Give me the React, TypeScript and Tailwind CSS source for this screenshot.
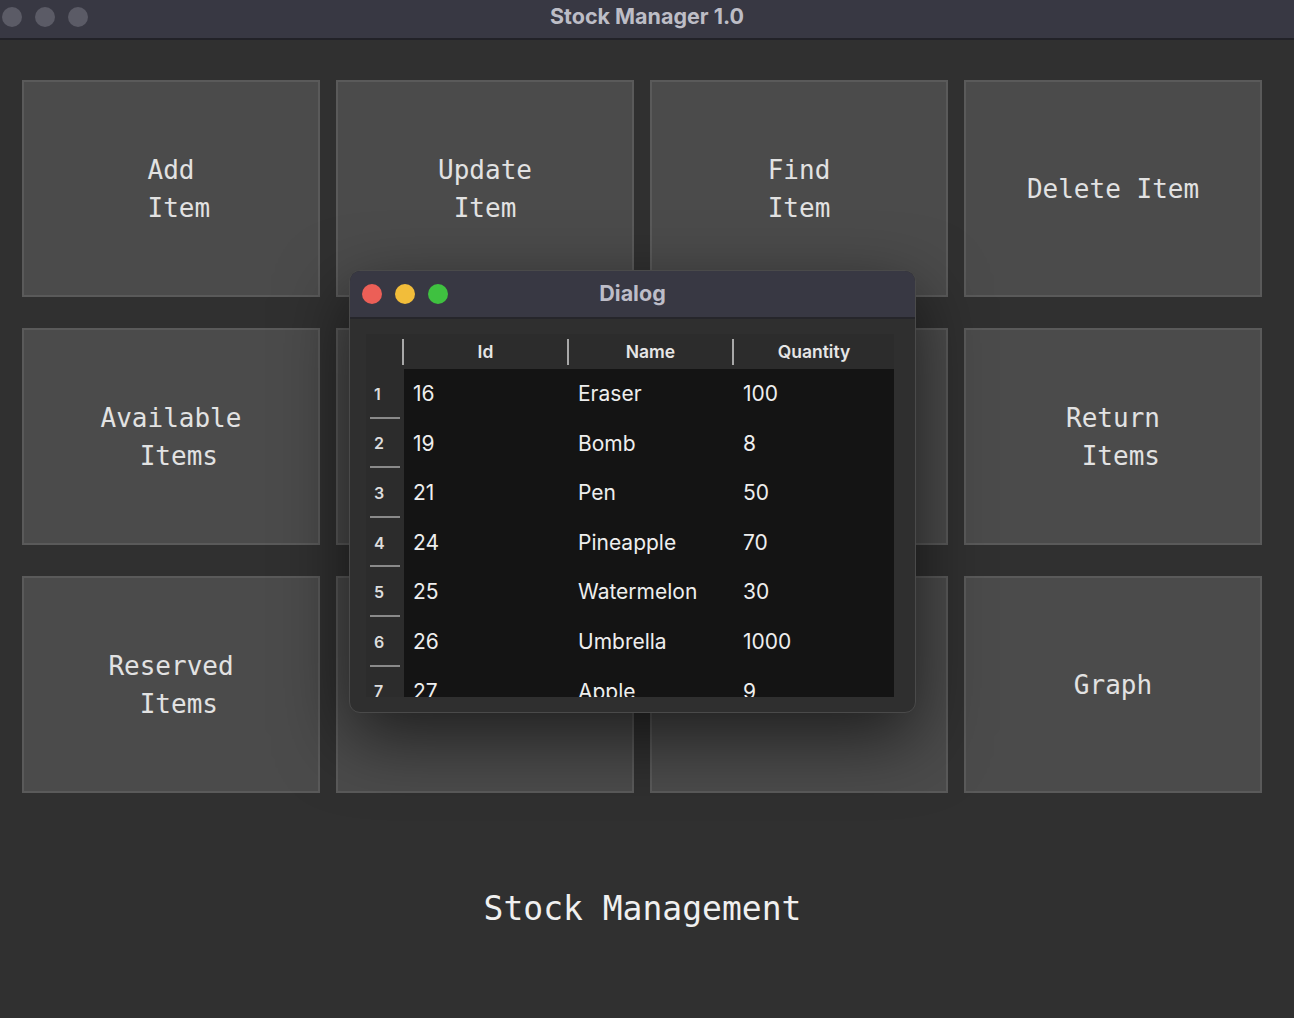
import React from 'react';

const tiles = [
  { label: ' Add \n Item' },
  { label: 'Update\nItem' },
  { label: 'Find\nItem' },
  { label: 'Delete Item' },
  { label: 'Available\n Items' },
  { label: '' },
  { label: '' },
  { label: 'Return\n Items' },
  { label: 'Reserved\n Items' },
  { label: '' },
  { label: '' },
  { label: 'Graph' },
];

const rows = [
  { id: 16, name: 'Eraser', qty: 100 },
  { id: 19, name: 'Bomb', qty: 8 },
  { id: 21, name: 'Pen', qty: 50 },
  { id: 24, name: 'Pineapple', qty: 70 },
  { id: 25, name: 'Watermelon', qty: 30 },
  { id: 26, name: 'Umbrella', qty: 1000 },
  { id: 27, name: 'Apple', qty: 9 },
];

const mono = { fontFamily: '"DejaVu Sans Mono", "Liberation Mono", monospace' };
const sys = { fontFamily: 'Inter, "Noto Sans", "Liberation Sans", sans-serif' };

const App: React.FC = () => {
  return (
    <div className="relative w-[1294px] h-[1018px] bg-[#303030] overflow-hidden flex flex-col">
      {/* Window title bar */}
      <div className="relative h-[40px] shrink-0 bg-[#383843] border-b-2 border-[#222228] flex items-center">
        <div className="flex items-center gap-[13px] pl-[2px] pb-[5px]">
          <span className="w-[20px] h-[20px] rounded-full bg-[#5b5b66]" />
          <span className="w-[20px] h-[20px] rounded-full bg-[#5b5b66]" />
          <span className="w-[20px] h-[20px] rounded-full bg-[#5b5b66]" />
        </div>
        <div
          className="absolute inset-0 flex items-center justify-center pb-[5px] text-[21.5px] font-bold text-[#bdbdc6]"
          style={sys}
        >
          Stock Manager 1.0
        </div>
      </div>

      {/* Button grid */}
      <div className="grid grid-cols-[298px_298px_298px_298px] auto-rows-[217px] gap-x-[16px] gap-y-[31px] pl-[22px] pt-[40px]">
        {tiles.map((t, i) => (
          <div
            key={i}
            className="bg-[#4b4b4b] border-2 border-[#5a5a5a] flex items-center justify-center text-center whitespace-pre leading-[38px] text-[26px] text-[#e2e2e2]"
            style={mono}
          >
            {t.label}
          </div>
        ))}
      </div>

      {/* Footer title */}
      <div className="flex-1 flex items-start justify-center pt-[91px] pr-[9px]">
        <span className="text-[33px] text-[#f0f0f0]" style={mono}>
          Stock Management
        </span>
      </div>

      {/* Dialog */}
      <div className="absolute left-[349px] top-[270px] w-[567px] h-[443px] rounded-[11px] bg-[#2f2f2f] border border-[#4a4a4a] shadow-[0_24px_70px_rgba(0,0,0,0.6)] flex flex-col overflow-hidden">
        <div className="relative h-[48px] shrink-0 bg-[#383843] border-b-2 border-[#26262b] flex items-center">
          <div className="flex items-center gap-[13px] pl-[12px]">
            <span className="w-[20px] h-[20px] rounded-full bg-[#ec5f57]" />
            <span className="w-[20px] h-[20px] rounded-full bg-[#f2bd3a]" />
            <span className="w-[20px] h-[20px] rounded-full bg-[#3fc140]" />
          </div>
          <div
            className="absolute inset-0 flex items-center justify-center pb-[2px] text-[21.5px] font-bold text-[#bdbdc8]"
            style={sys}
          >
            Dialog
          </div>
        </div>

        <div className="flex-1 pl-[16px] pr-[21px] pt-[15px] pb-[15px]">
          <div className="w-[528px] h-[363px] overflow-hidden bg-[#141414]" style={sys}>
            {/* Header */}
            <div className="grid grid-cols-[38px_165px_165px_160px] h-[35px] bg-[#2c2c2c] text-[17.5px] font-semibold text-[#e6e6e6]">
              <div className="border-r-2 border-[#a8a8a8] my-[5px]" />
              <div className="flex items-center justify-center border-r-2 border-[#a8a8a8] my-[5px]">Id</div>
              <div className="flex items-center justify-center border-r-2 border-[#a8a8a8] my-[5px]">Name</div>
              <div className="flex items-center justify-center">Quantity</div>
            </div>
            {/* Body */}
            {rows.map((r, i) => (
              <div key={r.id} className="grid grid-cols-[38px_165px_165px_160px] h-[49.6px] text-[21px] text-[#eeeeee]">
                <div className="relative bg-[#2c2c2c] flex items-center pl-[8px] text-[16px] font-semibold text-[#dddddd]">
                  {i + 1}
                  <span className="absolute left-[4px] right-[4px] bottom-0 h-[2px] bg-[#8a8a8a]" />
                </div>
                <div className="flex items-center pl-[9px]">{r.id}</div>
                <div className="flex items-center pl-[9px]">{r.name}</div>
                <div className="flex items-center pl-[9px]">{r.qty}</div>
              </div>
            ))}
          </div>
        </div>
      </div>
    </div>
  );
};

export default App;
